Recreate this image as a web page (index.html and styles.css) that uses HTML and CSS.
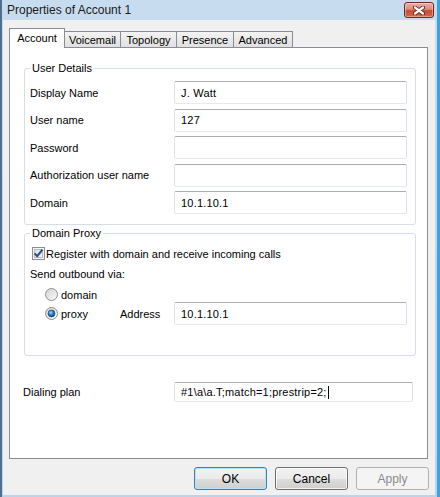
FILE: index.html
```html
<!DOCTYPE html>
<html>
<head>
    <title>Properties of Account 1</title>
    <link rel="stylesheet" href="styles.css">
</head>
<body>
    <div class="window">
        <div class="titlebar">
            <span class="title">Properties of Account 1</span>
            <span class="close-btn">
                <svg width="12" height="9" viewBox="0 0 12 9">
                    <path d="M2 1.5 L10 7.5 M10 1.5 L2 7.5" stroke="#5e2219" stroke-width="4" stroke-linecap="round"/>
                    <path d="M2 1.5 L10 7.5 M10 1.5 L2 7.5" stroke="#ffffff" stroke-width="2.2" stroke-linecap="round"/>
                </svg>
            </span>
        </div>

        <div class="client">
            <div class="tabs">
                <div class="tab active w-account">Account</div>
                <div class="tab w-voicemail">Voicemail</div>
                <div class="tab w-topology">Topology</div>
                <div class="tab w-presence">Presence</div>
                <div class="tab w-advanced">Advanced</div>
            </div>

            <div class="panel">
                <fieldset class="group user-details">
                    <legend>User Details</legend>
                    <div class="form-grid">
                        <label>Display Name</label>
                        <div class="field">J. Watt</div>
                        <label>User name</label>
                        <div class="field">127</div>
                        <label>Password</label>
                        <div class="field"></div>
                        <label>Authorization user name</label>
                        <div class="field"></div>
                        <label>Domain</label>
                        <div class="field">10.1.10.1</div>
                    </div>
                </fieldset>

                <fieldset class="group domain-proxy">
                    <legend>Domain Proxy</legend>
                    <div class="check-row">
                        <span class="checkbox">
                            <svg width="13" height="13" viewBox="0 0 13 13">
                                <defs>
                                    <linearGradient id="cbfill" x1="0" y1="0" x2="1" y2="1">
                                        <stop offset="0" stop-color="#d9dde2"/>
                                        <stop offset="1" stop-color="#f6f7f8"/>
                                    </linearGradient>
                                </defs>
                                <rect x="0.5" y="0.5" width="12" height="12" fill="#f4f4f4" stroke="#8e8f8f"/>
                                <rect x="2.5" y="2.5" width="8" height="8" fill="url(#cbfill)" stroke="#b6bbc1"/>
                                <path d="M2.6 6.4 L5.2 9.2 L10.4 2.6" fill="none" stroke="#2f4d80" stroke-width="2"/>
                            </svg>
                        </span>
                        Register with domain and receive incoming calls
                    </div>
                    <div class="send-label">Send outbound via:</div>
                    <div class="radio-row">
                        <span class="radio">
                            <svg width="13" height="13" viewBox="0 0 13 13">
                                <defs>
                                    <linearGradient id="rfill" x1="0" y1="0" x2="1" y2="1">
                                        <stop offset="0" stop-color="#d2d2d2"/>
                                        <stop offset="1" stop-color="#fafafa"/>
                                    </linearGradient>
                                </defs>
                                <circle cx="6.5" cy="6.5" r="6" fill="url(#rfill)" stroke="#8e8f8f"/>
                            </svg>
                        </span>
                        domain
                    </div>
                    <div class="radio-row proxy-row">
                        <span class="radio">
                            <svg width="13" height="13" viewBox="0 0 13 13">
                                <defs>
                                    <radialGradient id="rdot" cx="0.4" cy="0.35" r="0.7">
                                        <stop offset="0" stop-color="#9fe3ff"/>
                                        <stop offset="0.45" stop-color="#2c88d4"/>
                                        <stop offset="1" stop-color="#0c3d7a"/>
                                    </radialGradient>
                                </defs>
                                <circle cx="6.5" cy="6.5" r="6" fill="url(#rfill)" stroke="#8e8f8f"/>
                                <circle cx="6.5" cy="6.5" r="3.4" fill="url(#rdot)" stroke="#27496f" stroke-width="0.8"/>
                            </svg>
                        </span>
                        <span class="radio-text">proxy</span>
                        <span class="addr-label">Address</span>
                        <div class="field">10.1.10.1</div>
                    </div>
                </fieldset>

                <div class="dial-row">
                    <label>Dialing plan</label>
                    <div class="field dial">#1\a\a.T;match=1;prestrip=2;<span class="caret"></span></div>
                </div>
            </div>

            <div class="buttons">
                <button class="btn default">OK</button>
                <button class="btn">Cancel</button>
                <button class="btn disabled">Apply</button>
            </div>
        </div>
    </div>
</body>
</html>
```

FILE: styles.css
```css
* {
    box-sizing: border-box;
}

body {
    margin: 0;
    background-color: #3aa3e6;
    font-family: "Liberation Sans", Arial, sans-serif;
    font-size: 11px;
    color: #000;
}

.window {
    width: 437px;
    height: 497px;
    padding: 0 2px 2px 1px;
    border-left: 2px solid #4f6f90;
    background: linear-gradient(#c8dcf0, #bcd3ea);
    display: flex;
    flex-direction: column;
}

.titlebar {
    height: 20px;
    display: flex;
    align-items: center;
    padding-left: 4px;
    font-size: 12px;
    color: #1b1b1b;
}

.close-btn {
    width: 30px;
    height: 16px;
    margin: 2px 1px 0 auto;
    align-self: flex-start;
    display: flex;
    align-items: center;
    justify-content: center;
    border: 1px solid #6e2b22;
    border-radius: 3px;
    background: linear-gradient(#eab0a4 0%, #dc8a78 45%, #c94a33 55%, #d4694c 100%);
    box-shadow: inset 0 0 0 1px rgba(255, 255, 255, 0.35);
}

.client {
    flex: 1;
    background-color: #f0f0f0;
    padding-top: 8px;
    display: flex;
    flex-direction: column;
}

/* tab strip */
.tabs {
    display: flex;
    align-items: flex-end;
    height: 19px;
    padding-left: 6px;
}

.tab {
    height: 16px;
    margin-left: -1px;
    border: 1px solid #898c95;
    border-bottom: none;
    background: linear-gradient(#f3f3f3, #e0e0e0);
    display: flex;
    align-items: center;
    justify-content: center;
    padding-top: 1px;
}

.tab.active {
    height: 20px;
    margin-left: 0;
    margin-bottom: -1px;
    background: #fff;
    position: relative;
    z-index: 1;
    padding-top: 0;
    padding-bottom: 2px;
}

.w-account { width: 56px; }
.w-voicemail { width: 57px; }
.w-topology { width: 57px; }
.w-presence { width: 58px; }
.w-advanced { width: 60px; }

.panel {
    height: 412px;
    margin: 0 7px 0 6px;
    border: 1px solid #898c95;
    background-color: #fff;
}

/* group boxes */
.group {
    margin: 14px 11px 0 14px;
    padding: 6px 8px 10px 5px;
    border: 1px solid #d5dfe5;
    border-radius: 3px;
    min-width: 0;
}

.group legend {
    padding: 0 2px;
    line-height: 13px;
}

.domain-proxy {
    margin-top: 2px;
    padding-top: 7px;
    padding-bottom: 30px;
}

.form-grid {
    display: grid;
    grid-template-columns: 144px 1fr;
    grid-auto-rows: 23px;
    row-gap: 4.5px;
    align-items: center;
}

.field {
    height: 23px;
    border: 1px solid;
    border-color: #abadb3 #dbdfe6 #e3e9ef #e2e3ea;
    border-radius: 2px;
    background-color: #fff;
    padding-left: 6px;
    display: flex;
    align-items: center;
    white-space: nowrap;
    letter-spacing: 0.2px;
}

.check-row {
    display: flex;
    align-items: center;
    height: 13px;
}

.checkbox {
    display: flex;
    margin: 0 1px 0 2px;
}

.send-label {
    margin-top: 8px;
    line-height: 13px;
}

.radio-row {
    display: flex;
    align-items: center;
    height: 13px;
    margin-top: 7px;
}

.radio {
    display: flex;
    margin: 0 3px 0 15px;
}

.proxy-row {
    height: 23px;
    margin-top: 1px;
}

.radio-text {
    width: 59px;
}

.addr-label {
    width: 54px;
}

.proxy-row .field {
    flex: 1;
}

.dial-row {
    display: grid;
    grid-template-columns: 151px 1fr;
    align-items: center;
    margin: 26px 14px 0 0;
    padding-left: 13px;
}

.field.dial {
    height: 20px;
}

.caret {
    width: 1px;
    height: 13px;
    margin-left: 1px;
    background-color: #000;
}

/* dialog buttons */
.buttons {
    display: flex;
    justify-content: flex-end;
    gap: 8px;
    margin-top: 8px;
    padding-right: 6px;
}

.btn {
    width: 73px;
    height: 23px;
    padding: 0;
    border: 1px solid #707070;
    border-radius: 3px;
    background: linear-gradient(#f2f2f2 0%, #ebebeb 50%, #dddddd 51%, #cfcfcf 100%);
    box-shadow: inset 0 0 0 1px rgba(255, 255, 255, 0.7);
    font-family: "Liberation Sans", Arial, sans-serif;
    font-size: 12px;
    color: #000;
}

.btn.default {
    border-color: #3c7fb1;
    box-shadow: inset 0 0 0 1px #b9e3f8;
}

.btn.disabled {
    border-color: #adb2b5;
    background: #f4f4f4;
    box-shadow: none;
    color: #8a8a8a;
}
```
